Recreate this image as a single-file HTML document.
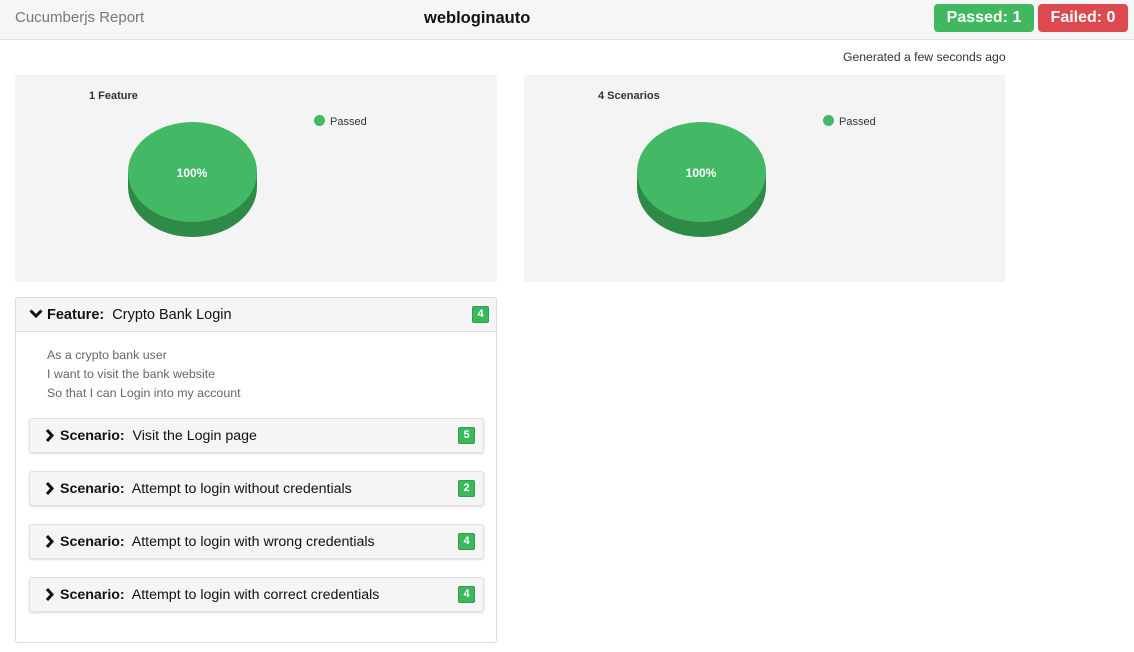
<!DOCTYPE html><html><head><style>
body{margin:0;width:1134px;height:652px;background:#fff;font-family:"Liberation Sans",sans-serif;position:relative;overflow:hidden;color:#333}
.a{position:absolute}
.hdr{left:0;top:0;width:1134px;height:39px;background:#f6f6f6;border-bottom:1px solid #e4e4e4}
.badge{height:28px;top:4px;border-radius:4px;color:#fff;font-weight:bold;font-size:16px;line-height:28px;text-align:center}
.panel{background:#f4f4f4;top:75px;width:482px;height:207px}
.sc{left:29px;width:453px;height:33px;background:#f5f5f5;border:1px solid #e0e0e0;border-radius:3px;box-shadow:0 1px 2px rgba(0,0,0,.15);font-size:14px;line-height:33px;color:#111}
.num{background:#3cb85c;color:#fff;font-size:11px;font-weight:bold;width:15px;height:15px;line-height:15px;text-align:center;border-radius:2px;border:1px solid #2ea04c}
.t{font-size:14.2px;color:#111}
</style></head><body>
<div class="a hdr"></div>
<div class="a" style="left:15px;top:9px;font-size:15px;color:#777">Cucumberjs Report</div>
<div class="a" style="left:424px;top:9px;font-size:16.5px;font-weight:bold;color:#111">webloginauto</div>
<div class="a badge" style="left:934px;width:100px;background:#3fb860">Passed: 1</div>
<div class="a badge" style="left:1038px;width:90px;background:#dc4a4f">Failed: 0</div>
<div class="a" style="left:843px;top:50px;font-size:12.2px;color:#333">Generated a few seconds ago</div>

<div class="a panel" style="left:15px"></div>
<div class="a panel" style="left:524px;width:481px"></div>
<svg class="a" style="left:0;top:0" width="1134" height="300">
<g><ellipse cx="192.5" cy="187" rx="64.5" ry="50" fill="#2e8a47"/><rect x="128" y="172" width="129" height="15" fill="#2e8a47"/><ellipse cx="192.5" cy="172" rx="64.5" ry="50" fill="#44b965"/>
<text x="192" y="177" fill="#fff" font-size="12" font-weight="bold" text-anchor="middle" font-family="Liberation Sans">100%</text>
<circle cx="319.5" cy="120.5" r="5.5" fill="#44b965"/><text x="330" y="125" font-size="11" fill="#333" font-family="Liberation Sans">Passed</text>
<text x="89" y="99" font-size="11" font-weight="bold" fill="#333" font-family="Liberation Sans">1 Feature</text></g>
<g transform="translate(509,0)"><ellipse cx="192.5" cy="187" rx="64.5" ry="50" fill="#2e8a47"/><rect x="128" y="172" width="129" height="15" fill="#2e8a47"/><ellipse cx="192.5" cy="172" rx="64.5" ry="50" fill="#44b965"/>
<text x="192" y="177" fill="#fff" font-size="12" font-weight="bold" text-anchor="middle" font-family="Liberation Sans">100%</text>
<circle cx="319.5" cy="120.5" r="5.5" fill="#44b965"/><text x="330" y="125" font-size="11" fill="#333" font-family="Liberation Sans">Passed</text>
<text x="89" y="99" font-size="11" font-weight="bold" fill="#333" font-family="Liberation Sans">4 Scenarios</text></g>
</svg>

<div class="a" style="left:15px;top:297px;width:480px;height:344px;border:1px solid #ddd;border-radius:3px"></div>
<div class="a" style="left:16px;top:298px;width:480px;height:33px;background:#f5f5f5;border-bottom:1px solid #ddd"></div>
<svg class="a" style="left:29px;top:309px" width="14" height="10"><path d="M1.5 1.5 L7 7 L12.5 1.5" stroke="#111" stroke-width="3" fill="none"/></svg>
<div class="a t" style="left:47px;top:307px;font-size:14.5px"><b>Feature:</b>&nbsp; Crypto Bank Login</div>
<div class="a num" style="left:472px;top:306px">4</div>
<div class="a" style="left:47px;top:346px;font-size:12.4px;color:#666;line-height:19px">As a crypto bank user<br>I want to visit the bank website<br>So that I can Login into my account</div>

<div class="a sc" style="top:418px"></div><div class="a sc" style="top:471px"></div><div class="a sc" style="top:524px"></div><div class="a sc" style="top:577px"></div>
<svg class="a" style="left:0;top:0" width="60" height="652"><g stroke="#111" stroke-width="3" fill="none"><path d="M47 430 L52 435.5 L47 441"/><path d="M47 483 L52 488.5 L47 494"/><path d="M47 536 L52 541.5 L47 547"/><path d="M47 589 L52 594.5 L47 600"/></g></svg>
<div class="a t" style="left:60px;top:428px"><b>Scenario:</b>&nbsp; Visit the Login page</div>
<div class="a t" style="left:60px;top:481px"><b>Scenario:</b>&nbsp; Attempt to login without credentials</div>
<div class="a t" style="left:60px;top:534px"><b>Scenario:</b>&nbsp; Attempt to login with wrong credentials</div>
<div class="a t" style="left:60px;top:587px"><b>Scenario:</b>&nbsp; Attempt to login with correct credentials</div>
<div class="a num" style="left:458px;top:427px">5</div>
<div class="a num" style="left:458px;top:480px">2</div>
<div class="a num" style="left:458px;top:533px">4</div>
<div class="a num" style="left:458px;top:586px">4</div>
</body></html>
